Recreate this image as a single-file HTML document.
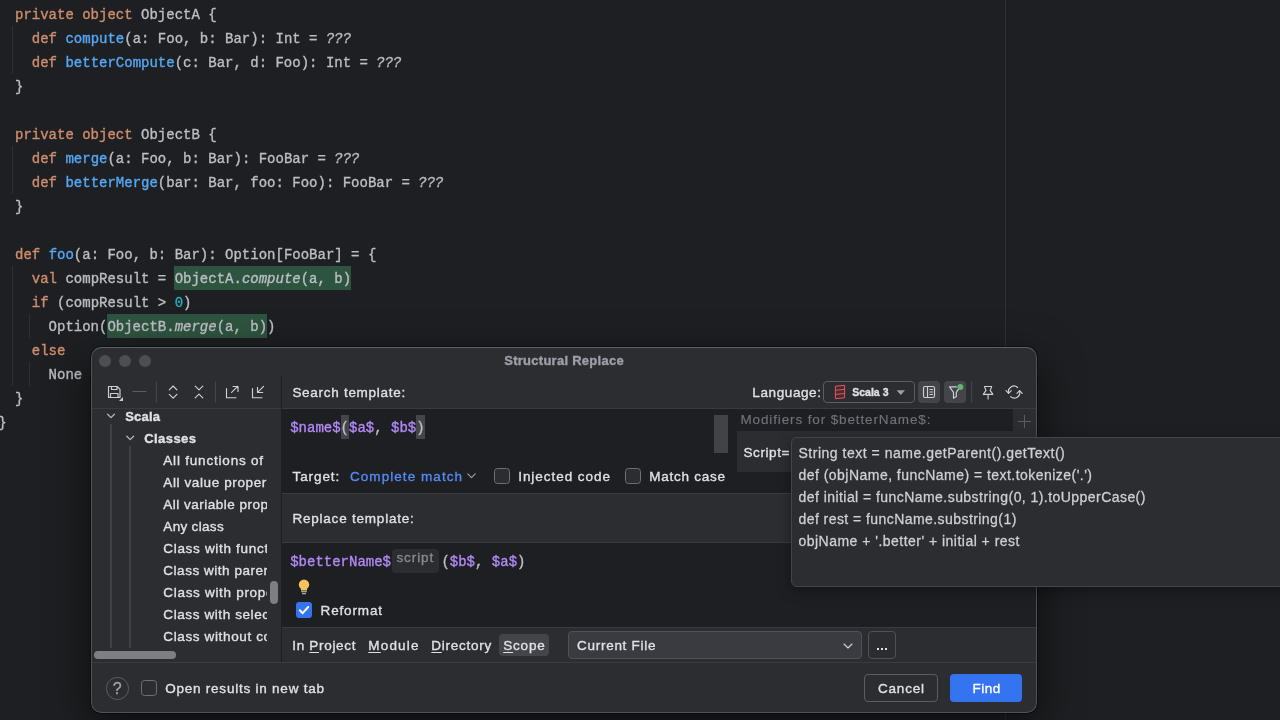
<!DOCTYPE html>
<html><head><meta charset="utf-8">
<style>
*{box-sizing:border-box;margin:0;padding:0}
html,body{width:1280px;height:720px;overflow:hidden;background:#1e1f22}
body{position:relative;will-change:transform;font-family:"Liberation Sans",sans-serif;color:#dfe1e5;font-size:14px}
.abs{position:absolute}
pre.code{position:absolute;left:15px;top:3px;font-family:"Liberation Mono",monospace;font-size:14px;line-height:24px;color:#bcbec4;-webkit-text-stroke:0.35px currentColor}
.k{color:#cf8e6d}.f{color:#56a8f5}.n{color:#2aacb8}.i{font-style:italic}
.hl{position:absolute;background:#2d543f;height:24px}
.guide{position:absolute;width:1px;background:#2e3034}
.t{position:absolute;white-space:pre;line-height:20px;height:20px;-webkit-text-stroke:0.35px currentColor}
.t u{text-decoration:underline;text-underline-offset:1.5px;text-decoration-thickness:1px}
.mono{position:absolute;white-space:pre;font-family:"Liberation Mono",monospace;font-size:14px;line-height:24px;height:24px;color:#bcbec4;-webkit-text-stroke:0.35px currentColor}
.v{color:#b189f5}
.ed{position:absolute;background:#1e1f22}
.ln{position:absolute;background:#393b40}
.cb{position:absolute;width:16px;height:16px;border:1px solid #6c7077;border-radius:3.5px;background:#2b2d30}
svg{position:absolute;overflow:visible}
</style></head><body>
<!-- editor -->
<div class="abs" style="left:1005px;top:0;width:1px;height:720px;background:#2f3135"></div>
<div class="hl" style="left:174.4px;top:266px;width:176.4px"></div>
<div class="hl" style="left:107.2px;top:314px;width:159.6px"></div>
<pre class="code"><span class="k">private object</span> ObjectA {
  <span class="k">def</span> <span class="f">compute</span>(a: Foo, b: Bar): Int = <span class="i">???</span>
  <span class="k">def</span> <span class="f">betterCompute</span>(c: Bar, d: Foo): Int = <span class="i">???</span>
}

<span class="k">private object</span> ObjectB {
  <span class="k">def</span> <span class="f">merge</span>(a: Foo, b: Bar): FooBar = <span class="i">???</span>
  <span class="k">def</span> <span class="f">betterMerge</span>(bar: Bar, foo: Foo): FooBar = <span class="i">???</span>
}

<span class="k">def</span> <span class="f">foo</span>(a: Foo, b: Bar): Option[FooBar] = {
  <span class="k">val</span> compResult = ObjectA.<span class="i">compute</span>(a, b)
  <span class="k">if</span> (compResult &gt; <span class="n">0</span>)
    Option(ObjectB.<span class="i">merge</span>(a, b))
  <span class="k">else</span>
    None
}
<span style="margin-left:-16.8px">}</span></pre>
<div class="guide" style="left:12px;top:26px;height:48px"></div>
<div class="guide" style="left:12px;top:146px;height:48px"></div>
<div class="guide" style="left:12px;top:266px;height:120px"></div>
<div class="guide" style="left:29px;top:314px;height:24px"></div>
<div class="guide" style="left:29px;top:362px;height:24px"></div>
<!-- dialog -->
<div class="abs" style="left:91px;top:347px;width:946px;height:366px;background:#2b2d30;border:1px solid #505257;border-top-color:#606266;border-radius:10.5px;box-shadow:0 14px 44px rgba(0,0,0,.6),0 0 0 1px rgba(0,0,0,.4);overflow:hidden">
<div class="abs" style="left:-92px;top:-348px;width:1280px;height:720px">

<!-- traffic lights -->
<div class="abs" style="left:99px;top:355px;width:12px;height:12px;border-radius:6px;background:#4c4e52"></div>
<div class="abs" style="left:119px;top:355px;width:12px;height:12px;border-radius:6px;background:#4c4e52"></div>
<div class="abs" style="left:139px;top:355px;width:12px;height:12px;border-radius:6px;background:#4c4e52"></div>

<!-- editors (dark areas) -->
<div class="ed" style="left:282px;top:409px;width:755px;height:84px"></div>
<div class="ed" style="left:282px;top:543px;width:755px;height:84px"></div>
<!-- lines -->
<div class="ln" style="left:92px;top:408px;width:945px;height:1px"></div>
<div class="ln" style="left:282px;top:493px;width:755px;height:1px"></div>
<div class="ln" style="left:282px;top:542px;width:755px;height:1px"></div>
<div class="ln" style="left:282px;top:627px;width:755px;height:1px"></div>
<div class="ln" style="left:92px;top:662px;width:945px;height:1px"></div>
<div class="ln" style="left:281px;top:376px;width:1px;height:286px;background:#1e1f22"></div>

<!-- left toolbar -->
<svg style="left:100px;top:376px" width="180" height="32" viewBox="100 376 180 32" fill="none" stroke="#ced0d6" stroke-width="1.15" stroke-linecap="round" stroke-linejoin="round">
<path d="M108.5 386.5h8.7l2.8 2.8v8.2h-11.5z"/>
<path d="M111.5 386.5v3h5.5v-3M110.5 397.5v-4h7.5v4"/>
<path d="M123 397v4h-4z" fill="#ced0d6" stroke="none"/>
<path d="M133 391.5h13" stroke="#5a5d63"/>
<path d="M156.5 382v20M215.5 382v20" stroke="#43454a"/>
<path d="M169.3 389.8l3.8-3.8 3.8 3.8M169.3 394.4l3.8 3.8 3.8-3.8"/>
<path d="M195.2 386.2l3.8 3.7 3.8-3.7M195.2 397.9l3.8-3.7 3.8 3.7"/>
<path d="M226.5 388.5v9.2h9.5M231.6 392.4l6-6M233 386.5h5v5"/>
<path d="M252.5 388.5v9.2h9.5M263.6 386.3l-6 6M257.5 387.3v5.2h5.2"/>
</svg>

<!-- language combo -->
<div class="abs" style="left:823px;top:381px;width:92px;height:22px;border:1px solid #5a5d63;border-radius:4px"></div>
<svg style="left:830px;top:382px" width="20" height="20" viewBox="830 382 20 20" fill="none" stroke="#e25563" stroke-width="1" stroke-linejoin="round">
<path d="M835.4 386.2l9.200-.9v12.500l-9.200.9z" fill="#4a2a2d"/>
<path d="M835.4 390.3l9.200-.9M835.4 394.4l9.200-.9"/>
</svg>
<svg style="left:896px;top:390px" width="10" height="6" viewBox="0 0 10 6"><path d="M0.6 0.3h8.4l-4.2 4.8z" fill="#9da0a8"/></svg>

<!-- toggle buttons -->
<div class="abs" style="left:918px;top:381px;width:22px;height:22px;border-radius:4px;background:#43454a"></div>
<div class="abs" style="left:944px;top:381px;width:22px;height:22px;border-radius:4px;background:#43454a"></div>
<svg style="left:918px;top:381px" width="120" height="24" viewBox="918 381 120 24" fill="none" stroke="#ced0d6" stroke-width="1.15" stroke-linecap="round" stroke-linejoin="round">
<rect x="923.5" y="386.5" width="11" height="11" rx="1.5"/>
<path d="M927.5 386.5v11M930 389.5h2.5M930 392h2.5M930 394.5h2.5"/>
<path d="M956.5 386.8h-7l4 5.6v5.8l2.8-1.6v-4.2l2.2-3.2"/>
<circle cx="960.3" cy="387" r="3" fill="#5fb865" stroke="none"/>
<path d="M971.5 382v20" stroke="#43454a"/>
<path d="M984.5 386.500h7.200c-.2 1.400-.9 2.300-1.500 3.900 1 1.800 2.300 2.600 2.600 4h-9.400c.3-1.400 1.600-2.200 2.600-4-.6-1.600-1.300-2.500-1.500-3.900zM988.100 394.600v4.300"/>
<path d="M1008.600 393A5.500 5.500 0 0 1 1017.600 387.500M1019.600 391A5.500 5.500 0 0 1 1010.600 396.600"/>
<path d="M1006 390.700l2.600 2.700 2.600-2.700M1017 393.300l2.600-2.700 2.600 2.700"/>
</svg>

<!-- search editor content -->
<div class="abs" style="left:340.6px;top:415px;width:8.4px;height:24px;background:#43454a"></div>
<div class="abs" style="left:416.2px;top:415px;width:8.4px;height:24px;background:#43454a"></div>
<div class="mono" style="left:290.2px;top:416px"><span class="v">$name$</span>(<span class="v">$a$</span>, <span class="v">$b$</span>)</div>
<div class="abs" style="left:714px;top:415px;width:14px;height:38px;background:#414347"></div>
<!-- modifiers panel -->
<div class="abs" style="left:737px;top:431px;width:276px;height:41px;background:#2b2d30"></div>
<div class="abs" style="left:1013px;top:409px;width:24px;height:84px;background:#2b2d30"></div>
<svg style="left:1017px;top:414px" width="15" height="15" viewBox="0 0 15 15" stroke="#5a5d63" stroke-width="1" fill="none"><path d="M7.5 1v13M1 7.5h13"/></svg>

<!-- target row -->
<svg style="left:467px;top:473px" width="9" height="6" viewBox="0 0 9 6" fill="none" stroke="#9da0a8" stroke-width="1.1" stroke-linecap="round" stroke-linejoin="round"><path d="M0.8 0.9l3.7 3.7 3.7-3.7"/></svg>
<div class="cb" style="left:494px;top:468px"></div>
<div class="cb" style="left:625px;top:468px"></div>

<!-- replace editor content -->
<div class="mono" style="left:290.2px;top:550px"><span class="v">$betterName$</span></div>
<div class="abs" style="left:392px;top:549px;width:46.5px;height:23.5px;border-radius:4px;background:#2b2d30"></div>
<div class="mono" style="left:441.4px;top:550px">(<span class="v">$b$</span>, <span class="v">$a$</span>)</div>
<svg style="left:298px;top:579px" width="12" height="16" viewBox="0 0 12 16"><path d="M6 0.4a5.2 5.2 0 0 1 5.2 5.2c0 2-1.1 3.3-2.2 4.3v1.5h-6v-1.5c-1.100-1-2.200-2.300-2.200-4.300a5.200 5.200 0 0 1 5.200-5.200z" fill="#f2c55c"/><path d="M3.200 12.700h5.600M4 14.700h4" stroke="#ced0d6" stroke-width="1.100" fill="none"/></svg>
<div class="abs" style="left:296px;top:602px;width:16px;height:16px;border-radius:3px;background:#3574f0"></div>
<svg style="left:296px;top:602px" width="16" height="16" viewBox="0 0 16 16" fill="none" stroke="#fff" stroke-width="2" stroke-linecap="round" stroke-linejoin="round"><path d="M3.800 8.300l2.900 2.900 5.500-6.200"/></svg>

<!-- scope row -->
<div class="abs" style="left:499px;top:634px;width:50px;height:22px;border-radius:4px;background:#43454a"></div>
<div class="abs" style="left:568px;top:631px;width:293.5px;height:28px;border:1px solid #4e5157;border-radius:4px;background:#393b40"></div>
<svg style="left:843px;top:643px" width="10" height="6" viewBox="0 0 10 6" fill="none" stroke="#ced0d6" stroke-width="1.1" stroke-linecap="round" stroke-linejoin="round"><path d="M1 1l4 4 4-4"/></svg>
<div class="abs" style="left:868px;top:631px;width:28px;height:28px;border:1px solid #4e5157;border-radius:4px"></div>
<div class="abs" style="left:877px;top:648px;width:2px;height:2px;background:#dfe1e5;box-shadow:4px 0 #dfe1e5,8px 0 #dfe1e5"></div>

<!-- bottom bar -->
<div class="abs" style="left:106px;top:677px;width:22.500px;height:22.500px;border:1px solid #5a5d63;border-radius:50%"></div>
<div class="cb" style="left:141px;top:680px"></div>
<div class="abs" style="left:864px;top:674px;width:74px;height:28px;border:1px solid #5a5d63;border-radius:4px"></div>
<div class="abs" style="left:950px;top:674px;width:72px;height:28px;border-radius:4px;background:#3574f0"></div>

<!-- tree -->
<div class="abs" style="left:92px;top:409px;width:175.200px;height:253px;overflow:hidden"><div class="abs" style="left:-92px;top:-409px;width:600px;height:720px">
<div class="abs" style="left:110px;top:424px;width:2px;height:224px;background:#3f4145"></div>
<div class="abs" style="left:129px;top:446px;width:2px;height:202px;background:#3f4145"></div>
<svg style="left:100px;top:405px" width="60" height="40" viewBox="100 405 60 40" fill="none" stroke="#b4b8bf" stroke-width="1.3" stroke-linecap="round" stroke-linejoin="round"><path d="M107.600 414.200L111 417.600L114.400 414.200M126.800 436.200L130.200 439.600L133.600 436.200"/></svg>
<span class="t" style="left:125.2px;top:407.40px;font-size:13px;font-weight:700;color:#dfe1e5;letter-spacing:0.204px;">Scala</span>
<span class="t" style="left:144.2px;top:429.40px;font-size:13px;font-weight:700;color:#dfe1e5;letter-spacing:0.441px;">Classes</span>
<span class="t" style="left:163.3px;top:451.22px;font-size:13.5px;font-weight:400;color:#dfe1e5;letter-spacing:0.800px;">All functions of a class</span>
<span class="t" style="left:163.3px;top:473.22px;font-size:13.5px;font-weight:400;color:#dfe1e5;letter-spacing:0.612px;">All value properties</span>
<span class="t" style="left:163.3px;top:495.22px;font-size:13.5px;font-weight:400;color:#dfe1e5;letter-spacing:0.500px;">All variable properties</span>
<span class="t" style="left:163.3px;top:517.22px;font-size:13.5px;font-weight:400;color:#dfe1e5;letter-spacing:0.324px;">Any class</span>
<span class="t" style="left:163.3px;top:539.22px;font-size:13.5px;font-weight:400;color:#dfe1e5;letter-spacing:0.687px;">Class with functions</span>
<span class="t" style="left:163.3px;top:561.22px;font-size:13.5px;font-weight:400;color:#dfe1e5;letter-spacing:0.534px;">Class with parents</span>
<span class="t" style="left:163.3px;top:583.22px;font-size:13.5px;font-weight:400;color:#dfe1e5;letter-spacing:0.694px;">Class with properties</span>
<span class="t" style="left:163.3px;top:605.22px;font-size:13.5px;font-weight:400;color:#dfe1e5;letter-spacing:0.598px;">Class with selectors</span>
<span class="t" style="left:163.3px;top:627.22px;font-size:13.5px;font-weight:400;color:#dfe1e5;letter-spacing:0.634px;">Class without companion</span>

</div></div>
<div class="abs" style="left:94px;top:651px;width:82px;height:8px;border-radius:4px;background:#7d7f83"></div>
<div class="abs" style="left:270px;top:581px;width:8px;height:22.500px;border-radius:4px;background:#7d7f83"></div>
<span class="t" style="left:504.2px;top:350.50px;font-size:13px;font-weight:700;color:#9da0a8;letter-spacing:0.272px;">Structural Replace</span>
<span class="t" style="left:292.4px;top:382.52px;font-size:13.5px;font-weight:400;color:#dfe1e5;letter-spacing:0.716px;">Search template:</span>
<span class="t" style="left:752.3px;top:382.52px;font-size:13.5px;font-weight:400;color:#dfe1e5;letter-spacing:0.609px;">Language:</span>
<span class="t" style="left:852.2px;top:382.16px;font-size:10.5px;font-weight:700;color:#dfe1e5;letter-spacing:0.016px;">Scala 3</span>
<span class="t" style="left:740.4px;top:409.92px;font-size:13.5px;font-weight:400;color:#6f737a;letter-spacing:0.876px;-webkit-text-stroke-width:0.15px;">Modifiers for $betterName$:</span>
<span class="t" style="left:743.4px;top:442.62px;font-size:13.5px;font-weight:400;color:#dfe1e5;letter-spacing:0.616px;">Script=</span>
<span class="t" style="left:292.5px;top:466.52px;font-size:13.5px;font-weight:400;color:#dfe1e5;letter-spacing:0.920px;">Target:</span>
<span class="t" style="left:350.0px;top:466.52px;font-size:13.5px;font-weight:400;color:#548af7;letter-spacing:1.054px;">Complete match</span>
<span class="t" style="left:518.2px;top:466.52px;font-size:13.5px;font-weight:400;color:#dfe1e5;letter-spacing:0.957px;">Injected code</span>
<span class="t" style="left:649.3px;top:466.52px;font-size:13.5px;font-weight:400;color:#dfe1e5;letter-spacing:0.741px;">Match case</span>
<span class="t" style="left:292.4px;top:509.12px;font-size:13.5px;font-weight:400;color:#dfe1e5;letter-spacing:0.787px;">Replace template:</span>
<span class="t" style="left:320.6px;top:600.52px;font-size:13.5px;font-weight:400;color:#dfe1e5;letter-spacing:0.838px;">Reformat</span>
<span class="t" style="left:292.2px;top:635.52px;font-size:13.5px;font-weight:400;color:#dfe1e5;letter-spacing:0.695px;">In <u>P</u>roject</span>
<span class="t" style="left:368.3px;top:635.52px;font-size:13.5px;font-weight:400;color:#dfe1e5;letter-spacing:1.181px;"><u>M</u>odule</span>
<span class="t" style="left:431.3px;top:635.52px;font-size:13.5px;font-weight:400;color:#dfe1e5;letter-spacing:0.736px;"><u>D</u>irectory</span>
<span class="t" style="left:503.2px;top:635.52px;font-size:13.5px;font-weight:400;color:#dfe1e5;letter-spacing:0.826px;"><u>S</u>cope</span>
<span class="t" style="left:577.0px;top:635.52px;font-size:13.5px;font-weight:400;color:#dfe1e5;letter-spacing:0.724px;">Current File</span>
<span class="t" style="left:165.2px;top:678.62px;font-size:13.5px;font-weight:400;color:#dfe1e5;letter-spacing:0.771px;">Open results in new tab</span>
<span class="t" style="left:878.0px;top:678.62px;font-size:13.5px;font-weight:400;color:#dfe1e5;letter-spacing:0.794px;">Cancel</span>
<span class="t" style="left:972.4px;top:678.62px;font-size:13.5px;font-weight:400;color:#ffffff;letter-spacing:0.511px;">Find</span>
<span class="t" style="left:112.8px;top:678.66px;font-size:16px;font-weight:400;color:#9da0a8;letter-spacing:-0.506px;">?</span>
<span class="t" style="left:396.4px;top:548.12px;font-size:13.5px;font-weight:400;color:#868a91;letter-spacing:0.927px;">script</span>
</div></div>
<!-- script popup -->
<div class="abs" style="left:791px;top:437px;width:520px;height:150px;background:#2b2d30;border:1px solid #43454a;border-radius:6px;box-shadow:0 4px 14px rgba(0,0,0,.35)"></div>
<span class="t" style="left:798.5px;top:443.45px;font-size:14px;font-weight:400;color:#ced0d6;letter-spacing:0.513px;-webkit-text-stroke-width:0.28px;">String text = name.getParent().getText()</span>
<span class="t" style="left:798.5px;top:465.45px;font-size:14px;font-weight:400;color:#ced0d6;letter-spacing:0.467px;-webkit-text-stroke-width:0.28px;">def (objName, funcName) = text.tokenize('.')</span>
<span class="t" style="left:798.5px;top:487.45px;font-size:14px;font-weight:400;color:#ced0d6;letter-spacing:0.447px;-webkit-text-stroke-width:0.28px;">def initial = funcName.substring(0, 1).toUpperCase()</span>
<span class="t" style="left:798.5px;top:509.45px;font-size:14px;font-weight:400;color:#ced0d6;letter-spacing:0.437px;-webkit-text-stroke-width:0.28px;">def rest = funcName.substring(1)</span>
<span class="t" style="left:798.5px;top:531.45px;font-size:14px;font-weight:400;color:#ced0d6;letter-spacing:0.478px;-webkit-text-stroke-width:0.28px;">objName + '.better' + initial + rest</span>

</body></html>
